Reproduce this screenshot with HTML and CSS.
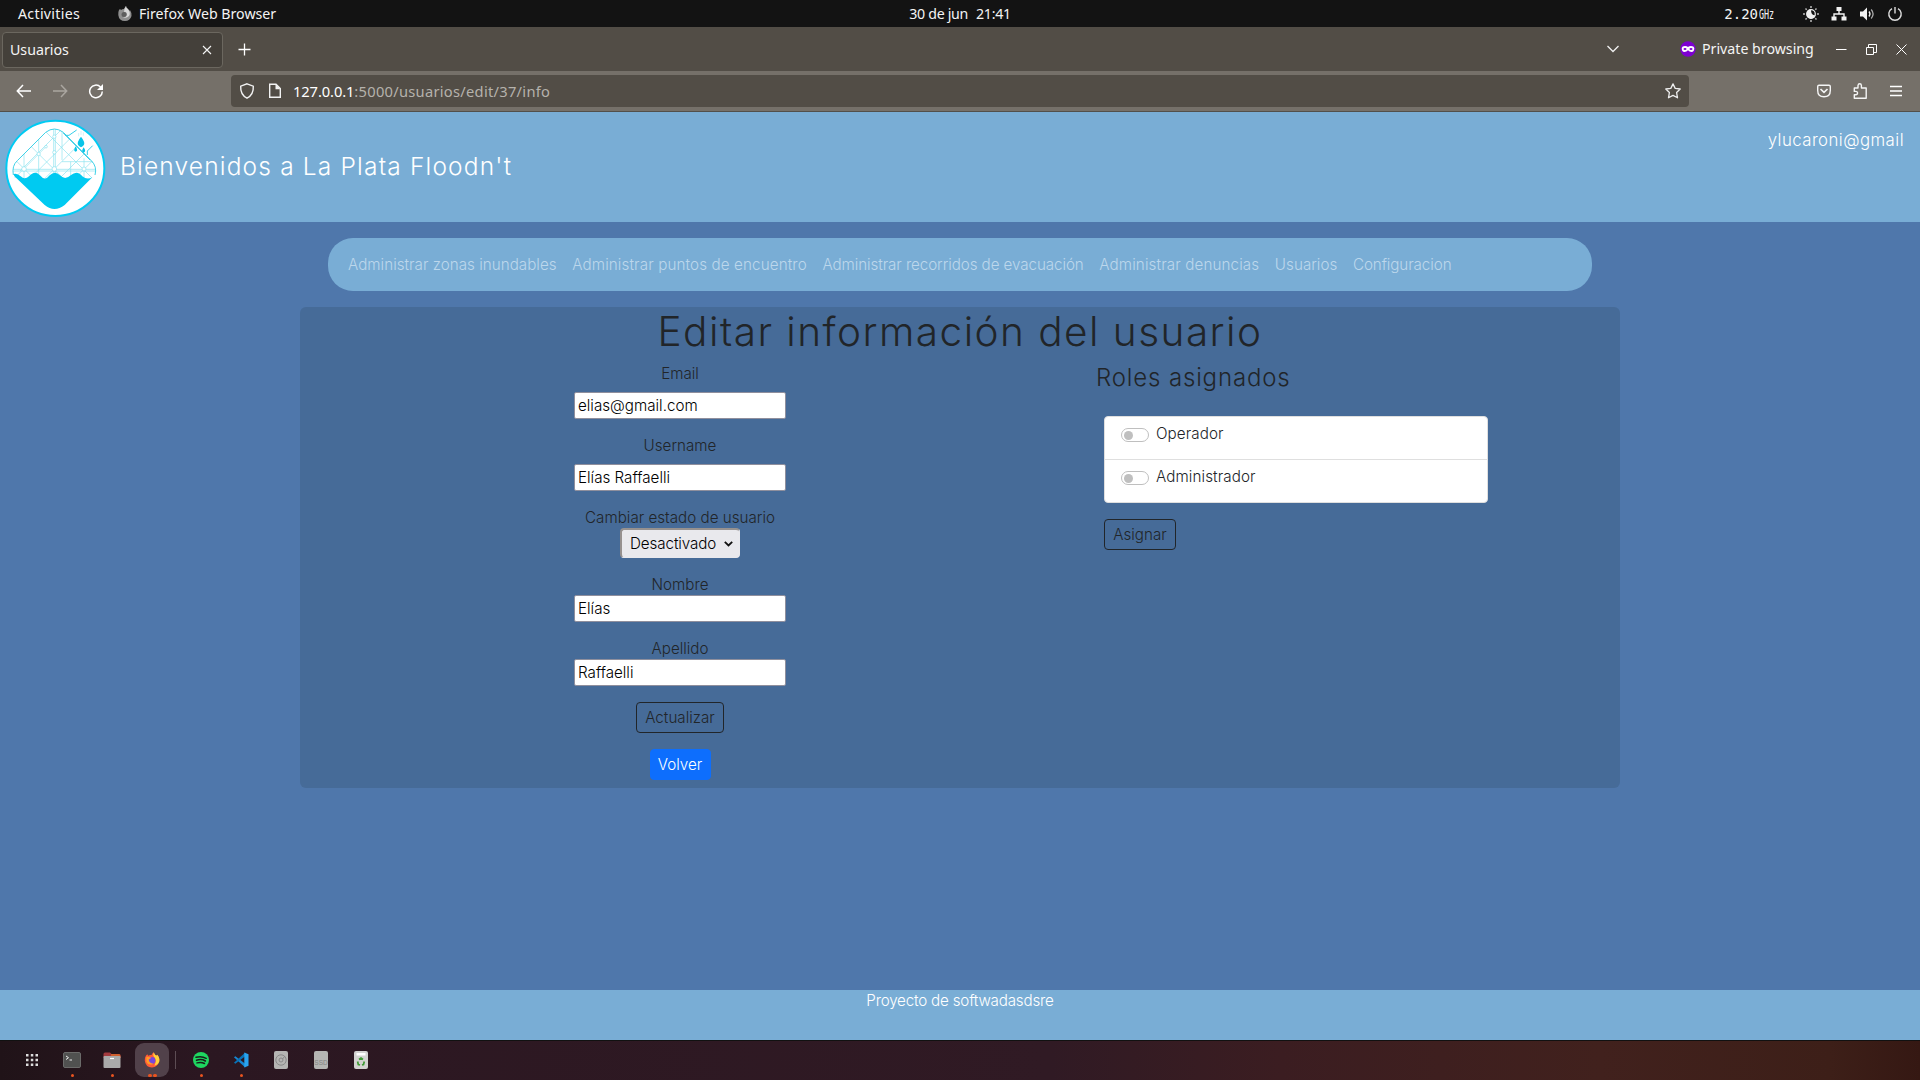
FILE: index.html
```html
<!DOCTYPE html>
<html lang="es">
<head>
<meta charset="utf-8">
<title>Usuarios</title>
<link rel="stylesheet" href="styles.css">
</head>
<body>
<div class="topbar">
  <div class="top-left">
    <span class="activities">Activities</span>
    <svg class="app-icon" width="16" height="16" viewBox="0 0 16 16"><path d="M2 4L3 3L4 4Q5 3 7 3Q8 1 9 0Q9 2 11 3Q12 4 12 5L13 4Q15 7 14.5 10Q13 15 8 15Q2 15 1.300 9Q1 6 2 4Z" fill="#8f8f8f"/><path d="M9 0Q9 2 11 3Q14 7 12 10Q9 13 6 11Q10 11 10 8Q9 5 7 6Q7 3 9 0Z" fill="#d8d8d8"/><circle cx="7" cy="8.500" r="2.500" fill="#5e5e5e"/></svg>
    <span class="app-name">Firefox Web Browser</span>
  </div>
  <div class="clock"><span>30 de jun</span><span>21:41</span></div>
  <div class="tray">
    <span class="freq">2.20<span class="ghz">GHz</span></span>
    <svg width="16" height="16" viewBox="0 0 16 16"><circle cx="8" cy="8" r="4.300" fill="none" stroke="#eee" stroke-width="1.200"/><path d="M8 3.500A4.500 4.500 0 1 0 12.500 9Q8 10 8 3.500Z" fill="#eee"/><g stroke="#bbb" stroke-width="1.500"><path d="M8 0V2M8 14V16M0 8H2M14 8H16M2.500 2.500L3.700 3.700M13.500 2.500L12.300 3.700M2.500 13.500L3.700 12.300M13.500 13.500L12.300 12.300"/></g></svg>
    <svg width="16" height="16" viewBox="0 0 16 16"><path d="M5.500 1h5v4h-5zM.500 10.500h5v4h-5zM10.500 10.500h5v4h-5z" fill="#f2f2f2"/><path d="M8 5V8M3 11V8H13V11" fill="none" stroke="#f2f2f2" stroke-width="1.400"/></svg>
    <svg width="16" height="16" viewBox="0 0 16 16"><path d="M1 5.500H4L8 1.500V14.500L4 10.500H1Z" fill="#f2f2f2"/><path d="M10 5.500Q12 8 10 10.500" fill="none" stroke="#f2f2f2" stroke-width="1.300"/><path d="M12.200 3.500Q16 8 12.200 12.500" fill="none" stroke="#aaa" stroke-width="1.300"/></svg>
    <svg width="16" height="16" viewBox="0 0 16 16" fill="none" stroke="#ddd" stroke-width="1.400"><path d="M5 2.600A6.200 6.200 0 1 0 11 2.600M8 1V7.500"/></svg>
  </div>
</div>

<div class="tabbar">
  <div class="tab"><span>Usuarios</span><svg width="10" height="10" viewBox="0 0 10 10"><path d="M1 1L9 9M9 1L1 9" stroke="#f5f5f5" stroke-width="1.100"/></svg></div>
  <svg class="new-tab" width="13" height="13" viewBox="0 0 13 13"><path d="M6.500 .500V12.500M.500 6.500H12.500" stroke="#fff" stroke-width="1.300"/></svg>
  <div class="window-side">
    <svg width="14" height="14" viewBox="0 0 14 14"><path d="M1.500 4L7 9.500L12.500 4" fill="none" stroke="#f0f0f0" stroke-width="1.300"/></svg>
    <div class="private"><svg width="16" height="16" viewBox="0 0 16 16"><circle cx="8" cy="8" r="7.700" fill="#7d00d1"/><path d="M1.700 7Q2 5 5 5Q7 5 8 6Q9 5 11 5Q14 5 14.300 7Q14.300 11 11.500 11Q9.500 11 8 9.200Q6.500 11 4.500 11Q1.700 11 1.700 7Z" fill="#fff"/><ellipse cx="5" cy="8" rx="1.500" ry="1.100" fill="#7d00d1"/><ellipse cx="11" cy="8" rx="1.500" ry="1.100" fill="#7d00d1"/></svg><span>Private browsing</span></div>
    <div class="win-buttons">
      <svg width="11" height="11" viewBox="0 0 11 11"><path d="M0 5.500H10.500" stroke="#fff"/></svg>
      <svg width="11" height="11" viewBox="0 0 11 11" fill="none" stroke="#fff"><path d="M.500 3.500H7.500V10.500H.500ZM2.500 3V.500H10.500V8.500H8"/></svg>
      <svg width="11" height="11" viewBox="0 0 11 11"><path d="M.500 .500L10.500 10.500M10.500 .500L.500 10.500" stroke="#fff"/></svg>
    </div>
  </div>
</div>

<div class="toolbar">
  <div class="nav-buttons">
    <svg width="16" height="16" viewBox="0 0 16 16" fill="none" stroke="#fff" stroke-width="1.500"><path d="M15 8H1.500M7 2L1.300 8L7 14"/></svg>
    <svg width="16" height="16" viewBox="0 0 16 16" fill="none" stroke="#aaa6a0" stroke-width="1.500"><path d="M1 8H14.500M9 2L14.700 8L9 14"/></svg>
    <svg width="16" height="16" viewBox="0 0 16 16" fill="none" stroke="#fff" stroke-width="1.500"><path d="M12.500 4A6.300 6.300 0 1 0 14.300 8.500"/><path d="M15 1V7H9Z" fill="#fff" stroke="none"/></svg>
  </div>
  <div class="urlbar">
    <svg width="16" height="16" viewBox="0 0 16 16"><path d="M8 .800L14.300 3.200Q14.800 11.500 8 15.200Q1.200 11.500 1.700 3.200Z" fill="none" stroke="#f2f2f2" stroke-width="1.400"/></svg>
    <svg class="doc" width="16" height="16" viewBox="0 0 16 16"><path d="M2.700 1.200H9L13.300 5.500V14.300H2.700Z" fill="none" stroke="#f2f2f2" stroke-width="1.400"/><path d="M8.500 1V6.200H13.500Z" fill="#f2f2f2"/></svg>
    <span class="host">127.0.0.1</span><span class="path">:5000/usuarios/edit/37/info</span>
    <svg class="star" width="16" height="16" viewBox="0 0 16 16"><path d="M8 .900L10.200 5.400L15.200 6L11.600 9.500L12.500 14.800L8 12.400L3.500 14.800L4.400 9.500L.800 6L5.800 5.400Z" fill="none" stroke="#eee" stroke-width="1.300" stroke-linejoin="round"/></svg>
  </div>
  <div class="tool-buttons">
    <svg width="16" height="16" viewBox="0 0 16 16" fill="none" stroke="#f5f5f5" stroke-width="1.400"><path d="M3 2.200H13Q14.300 2.200 14.300 3.500V7.500Q14.300 13.800 8 13.800Q1.700 13.800 1.700 7.500V3.500Q1.700 2.200 3 2.200Z"/><path d="M4.500 6L8 9.300L11.500 6" stroke-width="1.700"/></svg>
    <svg width="16" height="16" viewBox="0 0 16 16" fill="none" stroke="#f5f5f5" stroke-width="1.400" stroke-linejoin="round"><path d="M2.300 5H6V2.500Q6.200 .800 7.700 .800Q9.300 .800 9.400 2.500V5H14.200V15.200H2.300V11.800H4Q5.600 11.600 5.600 10Q5.600 8.500 4 8.400H2.300Z"/></svg>
    <svg width="16" height="16" viewBox="0 0 16 16"><path d="M2 3.500H14M2 8H14M2 12.500H14" stroke="#fff" stroke-width="1.300"/></svg>
  </div>
</div>

<header class="site-header">
  <svg class="logo" width="112" height="110" viewBox="0 0 336 330">
    <defs><clipPath id="map"><path d="M137 52Q163 32 190 52L276 138Q290 152 287 190H40Q34 155 50 138Z"/></clipPath></defs>
    <ellipse cx="166" cy="160" rx="147" ry="143" fill="#fff" stroke="#00cbf3" stroke-width="6"/>
    <g clip-path="url(#map)" fill="none" stroke="#8be2ee" stroke-width="2">
      <path d="M30 163H290M30 168H290M161 30V200M166 30V200M116 60V200M186 40V135M72 100V200M212 140V200M252 130V200M186 140H290"/>
      <path d="M94 95L200 201M50 139L110 199M138 51L276 189M138 95L94 139L34 199M186 42L60 168M210 71L96 185M232 93L125 200M252 117L170 199M190 54L280 144M276 139L216 199"/>
      <g fill="#fff"><circle cx="163" cy="162" r="7"/><circle cx="72" cy="162" r="7"/><circle cx="252" cy="162" r="6"/><circle cx="163" cy="65" r="5"/><circle cx="163" cy="112" r="5"/><circle cx="116" cy="117" r="5"/><circle cx="138" cy="95" r="4"/></g>
    </g>
    <path d="M40 180Q35 152 52 137L137 52Q163 32 190 52L274 137Q292 155 285 180" fill="none" stroke="#3fd2e8" stroke-width="3"/>
    <path d="M190 54L270 135M195 61H207L230 45M262 120V108L278 92" fill="none" stroke="#35cee8" stroke-width="3"/>
    <path d="M243 65Q257 82 251 91Q243 102 235 91Q229 82 243 65ZM227 94Q236 108 227 110Q218 108 227 94ZM251 97Q260 110 251 113Q242 110 251 97Z" fill="#08c4e8"/>
    <path d="M236 54V64M243 48V60M250 52V62" stroke="#b9edf5" stroke-width="2"/>
    <path d="M41 177Q52 174 62 184Q74 196 87 184Q104 164 119 180Q135 200 149 181Q165 166 180 181Q195 197 212 181Q232 164 247 184Q261 196 277 187L194 270Q163 294 134 270L48 188Q41 183 41 177Z" fill="#00caf1"/>
  </svg>
  <div class="welcome">Bienvenidos a La Plata Floodn't</div>
  <div class="account">ylucaroni@gmail</div>
</header>

<main>
  <nav class="menu">
    <a>Administrar zonas inundables</a><a class="loose">Administrar puntos de encuentro</a><a class="tight">Administrar recorridos de evacuación</a><a class="loose">Administrar denuncias</a><a>Usuarios</a><a class="tight">Configuracion</a>
  </nav>
  <section class="panel">
    <h1>Editar información del usuario</h1>
    <div class="columns">
      <form class="user-form">
        <label class="spaced">Email</label><input value="elias@gmail.com">
        <label class="spaced">Username</label><input value="Elías Raffaelli">
        <label>Cambiar estado de usuario</label>
        <div class="select"><span>Desactivado</span><svg width="9" height="6" viewBox="0 0 9 6"><path d="M.800 .800L4.500 4.500L8.200 .800" fill="none" stroke="#111" stroke-width="1.800"/></svg></div>
        <label>Nombre</label><input value="Elías">
        <label>Apellido</label><input value="Raffaelli">
        <button type="button" class="btn outline update">Actualizar</button>
        <button type="button" class="btn primary">Volver</button>
      </form>
      <div class="roles">
        <h4>Roles asignados</h4>
        <ul>
          <li><i class="switch"></i>Operador</li>
          <li><i class="switch"></i>Administrador</li>
        </ul>
        <button type="button" class="btn outline assign">Asignar</button>
      </div>
    </div>
  </section>
</main>

<footer class="site-footer">Proyecto de softwadasdsre</footer>

<div class="dock">
  <div class="app"><svg width="14" height="14" viewBox="0 0 14 14" fill="#ddd"><path d="M1 1h2.500v2.500H1zM5.800 1h2.500v2.500H5.800zM10.500 1H13v2.500h-2.500zM1 5.800h2.500v2.500H1zM5.800 5.800h2.500v2.500H5.800zM10.500 5.800H13v2.500h-2.500zM1 10.500h2.500V13H1zM5.800 10.500h2.500V13H5.800zM10.500 10.500H13V13h-2.500z"/></svg></div>
  <div class="app run"><svg width="18" height="16" viewBox="0 0 18 16"><rect x=".500" y=".500" width="17" height="15" rx="1.500" fill="#505150" stroke="#6b6b6a"/><path d="M3 4L5.500 5.700L3 7.500M6.500 8H9" fill="none" stroke="#eee"/></svg></div>
  <div class="app run"><svg width="18" height="16" viewBox="0 0 18 16"><path d="M.500 2Q.500 .500 2 .500H7L8.500 2H16Q17.500 2 17.500 4V6H.500Z" fill="#a33a3e"/><path d="M8 2H16Q17.500 2 17.500 4V6H8Z" fill="#d0602f"/><rect x=".500" y="4" width="17" height="12" rx="1" fill="#aaa"/><path d="M7 6.500H11" stroke="#fff" stroke-width="1.200"/></svg></div>
  <div class="app run two active"><svg width="16" height="16" viewBox="0 0 17 17"><path d="M2 4L3.500 2.500L4.500 4Q6 3 8 3.300Q8.500 1.500 10.500 .300Q10.800 2.500 13 4L14 2.800Q17 6 16.200 10Q14.500 16 8.500 16.500Q1.500 16 .800 9Q.800 6 2 4Z" fill="#ff5b36"/><path d="M10.500 .300Q10.800 2.500 13 4L14 2.800Q17 6 16.200 10Q15 13.500 11 14.500Q14 9 11 5.500Q9 4 10.500 .300Z" fill="#ffd43a"/><circle cx="8.500" cy="9" r="3.600" fill="#7548dc"/><path d="M2.500 5Q5 5 8 6.200Q6 7.500 5 8Q5.500 12 10 12.500Q5 15 2.500 10.500Z" fill="#ff9a28"/></svg></div>
  <div class="separator"></div>
  <div class="app run"><svg width="16" height="16" viewBox="0 0 16 16"><circle cx="8" cy="8" r="8" fill="#1ed760"/><path d="M3 5.300Q8.500 3.600 13.200 6.300M3.500 8.200Q8.500 6.700 12.400 9M4 10.900Q8.300 9.700 11.500 11.500" fill="none" stroke="#17201a" stroke-width="1.500" stroke-linecap="round"/></svg></div>
  <div class="app run"><svg width="16" height="16" viewBox="0 0 17 17"><path d="M1 5.500L2.500 4.500L13 12.500V16.500Z" fill="#1687d2"/><path d="M1 11.500L2.500 12.500L13 4.500V.500Z" fill="#0873b9"/><path d="M12 .500L16.500 2.500V14.500L12 16.500Z" fill="#29a3ef"/></svg></div>
  <div class="app"><svg width="14" height="18" viewBox="0 0 14 18"><rect width="14" height="18" rx="2" fill="#b5b5b3"/><circle cx="7" cy="9" r="5.200" fill="none" stroke="#888"/><circle cx="7" cy="9" r="2" fill="none" stroke="#888"/><path d="M8.500 8L11 5" stroke="#888"/></svg></div>
  <div class="app"><div class="ssd">SSD</div></div>
  <div class="app"><svg width="14" height="18" viewBox="0 0 14 18"><rect width="14" height="18" rx="2" fill="#d3d3d1"/><path d="M2.500 2H11.500V4.500H2.500Z" fill="#fff"/><path d="M5 8.500L7 7L9 8.500M10.300 10.500L9.500 13.500L8 14M6 14L4.300 13.500L3.600 10.500" fill="none" stroke="#3f9b35" stroke-width="1.700"/></svg></div>
</div>
</body>
</html>
```
FILE: styles.css
```css
* { box-sizing: border-box; }
body {
  margin: 0; width: 1920px; height: 1080px; overflow: hidden;
  display: flex; flex-direction: column;
  font: 300 15.2px/24px Inter, "Liberation Sans", sans-serif;
  color: #212529; background: #4f77ab;
}
svg { display: block; flex: none; }

.topbar, .tabbar, .toolbar { flex: none; font: 400 14.2px/20px "Noto Sans", "Open Sans", sans-serif; color: #f4f4f4; white-space: nowrap; }
.topbar { height: 27px; background: #131313; display: grid; grid-template-columns: 1fr auto 1fr; align-items: center; }
.top-left { display: flex; align-items: center; padding-left: 18px; }
.activities { width: 99px; letter-spacing: .3px; }
.app-name { margin-left: 6px; }
.clock { display: flex; gap: 8px; letter-spacing: -.3px; }
.tray { display: flex; align-items: center; justify-content: flex-end; gap: 12px; padding-right: 17px; }
.freq { font: 14px/20px "DejaVu Sans Mono", monospace; margin-right: 17px; display: flex; }
.ghz { width: 15px; margin-left: 1px; transform: scaleX(.6); transform-origin: left center; }

.tabbar { height: 44px; background: #524d46; display: flex; align-items: center; }
.tab { width: 221px; height: 36px; margin: 1px 0 0 2px; border: 1px solid #6b675f; border-radius: 4px; background: #44403a; display: flex; align-items: center; justify-content: space-between; padding: 0 10px 0 7px; }
.new-tab { margin-left: 15px; }
.window-side { margin-left: auto; padding-right: 13px; display: flex; align-items: center; }
.private { display: flex; align-items: center; gap: 6px; margin-left: 60px; width: 156px; }
.win-buttons { display: flex; gap: 19px; }

.toolbar { height: 41px; background: #757069; border-bottom: 1px solid #524f4a; display: flex; align-items: center; padding: 0 16px; }
.nav-buttons { display: flex; gap: 20px; width: 215px; }
.urlbar { width: 1458px; height: 32px; border-radius: 4px; background: #524d46; display: flex; align-items: center; padding: 0 8px; font-size: 14.700px; }
.doc { margin: 0 10px 0 12px; }
.host { color: #fff; letter-spacing: -.1px; }
.path { color: #b5b2ac; letter-spacing: .27px; }
.star { margin-left: auto; }
.tool-buttons { display: flex; gap: 20px; margin-left: auto; }

.site-header { height: 110px; flex: none; background: #79add5; color: #fff; display: flex; }
.logo { margin-top: 3px; }
.welcome { margin: 36px 0 0 8px; font-size: 24.500px; line-height: 36px; letter-spacing: 1.170px; }
.account { margin: 16px 16px 0 auto; font-size: 16.800px; letter-spacing: .450px; }

main { flex: 1; padding: 16px 300px; }
.menu { height: 53px; margin: 0 28px 16px; padding: 1px 20px 0; border-radius: 25px; background: #79add5; color: #bcd7ec; display: flex; align-items: center; gap: 15.600px; white-space: nowrap; letter-spacing: .020px; }
.loose { letter-spacing: .120px; }
.tight { letter-spacing: -.080px; }
.panel { height: 481px; border-radius: 6px; background: #466b98; }
h1 { margin: 0; padding-top: 1px; font-size: 40.500px; font-weight: 350; line-height: 47px; text-align: center; letter-spacing: 1.480px; }
.columns { display: grid; grid-template-columns: 760px 392px; gap: 36px; padding-top: 7px; }
.user-form { display: flex; flex-direction: column; align-items: center; }
label { height: 24px; margin-bottom: -2px; }
label.spaced { margin-bottom: 6px; }
input { width: 212px; height: 27px; margin: 0 0 15px; padding: 0 3px; border: 1px solid #8f8f9d; border-radius: 2px; background: #fff; font: inherit; color: #000; }
.select { width: 120px; height: 30px; margin-bottom: 15px; padding: 0 6px 0 8px; border: 1px solid #e9e9ed; border-top: 2px solid #96918f; border-left: 2px solid #96918f; border-radius: 4px; background: #e9e9ed; color: #000; display: flex; align-items: center; justify-content: space-between; line-height: 22px; letter-spacing: -.1px; }
.btn { height: 31px; padding: 0; border: 1px solid; border-radius: 4px; background: none; font: inherit; }
.outline { border-color: #212529; color: #212529; }
.update { width: 88px; margin: 1px 0 16px; }
.primary { width: 61px; background: #0d6efd; border-color: #0d6efd; color: #fff; }
.assign { width: 72px; margin-left: 8px; }
h4 { margin: 0 0 23px; font-size: 24px; line-height: 31px; font-weight: 300; letter-spacing: .850px; }
ul { list-style: none; margin: 0 0 16px 8px; padding: 0; width: 384px; border: 1px solid #dfdfdf; border-radius: 4px; background: #fff; }
li { height: 42px; padding: 5px 16px; display: flex; gap: 7px; letter-spacing: .100px; }
li + li { height: 43px; border-top: 1px solid #dfdfdf; }
.switch { width: 28px; height: 14px; margin-top: 6px; border: 1px solid #bfbfbf; border-radius: 7px; display: flex; align-items: center; padding-left: 2px; }
.switch::before { content: ""; width: 9px; height: 9px; border-radius: 50%; background: #bfbfbf; }

.site-footer { height: 50px; flex: none; background: #79add5; color: #fff; text-align: center; line-height: 22px; letter-spacing: -.2px; }

.dock { height: 40px; flex: none; border-top: 1px solid #111; padding: 2px 15px 0; display: flex; gap: 6px; background: linear-gradient(90deg, #201318, #2b1721 200px, #301a24 1050px, #3b1d21 1280px, #41211d 1600px, #3d1f18 1830px, #351813); }
.app { position: relative; width: 34px; height: 34px; border-radius: 9px; display: grid; place-items: center; }
.active { background: #51414a; }
.run::after { content: ""; position: absolute; bottom: 0; left: 15.500px; width: 3.500px; height: 3.500px; border-radius: 50%; background: #e95420; }
.two::after { left: 13px; box-shadow: 5px 0 #e95420; }
.separator { width: 3px; height: 18px; margin-top: 8px; border-left: 1px solid #5d4d54; }
.ssd { width: 14px; height: 18px; border-radius: 2px; background: #b5b5b3; color: #858585; font: 6.500px/24px "Liberation Sans", sans-serif; text-align: center; }
```
